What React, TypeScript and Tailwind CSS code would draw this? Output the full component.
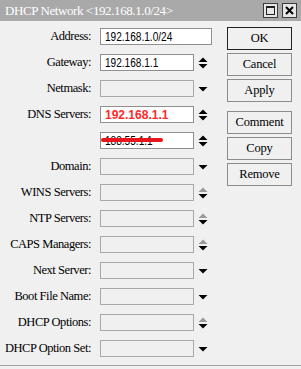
import type { ReactNode } from 'react';

type Arrow = 'both' | 'down' | 'half' | 'none';

type Field = {
    label: string;
    value?: ReactNode;
    enabled?: boolean;
    wide?: boolean;
    redacted?: boolean;
    arrow: Arrow;
};

const serif = "font-['Liberation_Serif',serif]";

function Arrows({ kind }: { kind: Arrow }) {
    if (kind === 'none') return null;
    if (kind === 'down') {
        return (
            <svg width="10" height="12" viewBox="0 0 10 12" className="shrink-0">
                <polygon points="0.5,4 9.5,4 5,8.5" fill="#000" />
            </svg>
        );
    }
    return (
        <svg width="10" height="12" viewBox="0 0 10 12" className="shrink-0">
            <polygon points="5,0.5 9.5,5 0.5,5" fill={kind === 'half' ? '#9a9a9a' : '#000'} />
            <polygon points="0.5,7 9.5,7 5,11.5" fill="#000" />
        </svg>
    );
}

function IpText({ children }: { children: ReactNode }) {
    return (
        <span className="inline-block origin-left scale-x-[0.84] font-['Liberation_Sans',sans-serif] text-[12px] leading-none text-black">
            {children}
        </span>
    );
}

const fields: Field[] = [
    { label: 'Address:', value: <IpText>192.168.1.0/24</IpText>, enabled: true, wide: true, arrow: 'none' },
    { label: 'Gateway:', value: <IpText>192.168.1.1</IpText>, enabled: true, arrow: 'both' },
    { label: 'Netmask:', arrow: 'down' },
    {
        label: 'DNS Servers:',
        value: (
            <span className="font-['Liberation_Sans',sans-serif] text-[12px] font-bold leading-none text-[#ff2a2a]">
                192.168.1.1
            </span>
        ),
        enabled: true,
        arrow: 'both',
    },
    {
        label: '',
        value: <IpText>188.55.1.1</IpText>,
        enabled: true,
        redacted: true,
        arrow: 'both',
    },
    { label: 'Domain:', arrow: 'down' },
    { label: 'WINS Servers:', arrow: 'half' },
    { label: 'NTP Servers:', arrow: 'half' },
    { label: 'CAPS Managers:', arrow: 'half' },
    { label: 'Next Server:', arrow: 'down' },
    { label: 'Boot File Name:', arrow: 'down' },
    { label: 'DHCP Options:', arrow: 'half' },
    { label: 'DHCP Option Set:', arrow: 'down' },
];

function Button({ children, main }: { children: ReactNode; main?: boolean }) {
    return (
        <div
            className={`flex h-[23px] w-[65px] items-center justify-center border bg-[#f0f0f0] ${serif} text-[12.5px] tracking-[-0.2px] text-black ${
                main ? 'border-[#202020]' : 'border-[#8c8c8c]'
            }`}
        >
            {children}
        </div>
    );
}

export default function App() {
    return (
        <div className="flex h-[369px] w-[301px] flex-col overflow-hidden bg-[#f0f0f0]">
            {/* Title bar */}
            <div className="flex h-[21px] shrink-0 items-center justify-between bg-[#a9a9a9] pl-[5px] pr-[4px]">
                <span className={`${serif} text-[13px] tracking-[-0.4px] text-white`}>
                    DHCP Network &lt;192.168.1.0/24&gt;
                </span>
                <div className="flex gap-[4px]">
                    <div className="flex h-[15px] w-[15px] items-center justify-center border border-[#3c3c3c] bg-[#e6e6e6]">
                        <div className="h-[9px] w-[9px] border border-t-2 border-[#202020]" />
                    </div>
                    <div className="flex h-[15px] w-[15px] items-center justify-center border border-[#3c3c3c] bg-[#e6e6e6]">
                        <svg width="9" height="9" viewBox="0 0 9 9">
                            <path d="M1 1 L8 8 M8 1 L1 8" stroke="#000" strokeWidth="2" />
                        </svg>
                    </div>
                </div>
            </div>

            {/* Body */}
            <div className="flex flex-1 border-b border-[#a0a0a0]">
                <div className="flex flex-col gap-[9px] pt-[7px]">
                    {fields.map((f, i) => (
                        <div key={i} className="flex h-[17px] items-center">
                            <div
                                className={`w-[92px] pr-[1px] text-right ${serif} text-[12.5px] tracking-[-0.45px] text-black`}
                            >
                                {f.label}
                            </div>
                            <div
                                className={`relative ml-[8px] flex h-[17px] items-center overflow-hidden border pl-[4px] ${
                                    f.wide ? 'w-[112px]' : 'w-[94px]'
                                } ${f.enabled ? 'border-[#8f8f8f] bg-white' : 'border-[#a8a8a8] bg-[#f0f0f0]'}`}
                            >
                                {f.value}
                                {f.redacted && (
                                    <span className="absolute left-0 top-[5px] h-[4px] w-[62px] rounded-full bg-[#e8161c]" />
                                )}
                            </div>
                            {f.arrow !== 'none' && (
                                <div className="ml-[4px] flex items-center">
                                    <Arrows kind={f.arrow} />
                                </div>
                            )}
                        </div>
                    ))}
                </div>

                <div className="ml-auto mr-[9px] flex flex-col pt-[6px]">
                    <div className="flex flex-col gap-[3px]">
                        <Button main>OK</Button>
                        <Button>Cancel</Button>
                        <Button>Apply</Button>
                    </div>
                    <div className="mt-[9px] flex flex-col gap-[3px]">
                        <Button>Comment</Button>
                        <Button>Copy</Button>
                        <Button>Remove</Button>
                    </div>
                </div>
            </div>
            <div className="h-[3px] shrink-0" />
        </div>
    );
}
